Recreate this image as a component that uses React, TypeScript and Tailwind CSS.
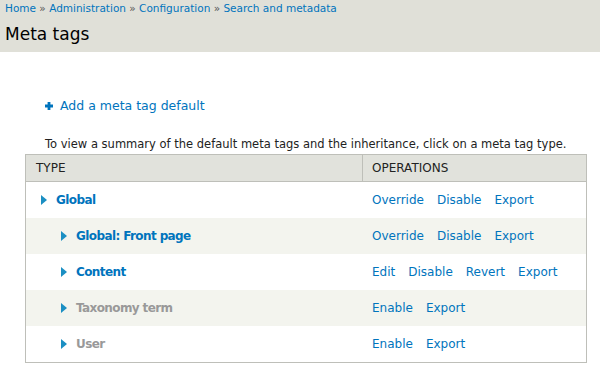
import React from "react";

const rows = [
  { name: "Global", depth: 0, disabled: false, ops: ["Override", "Disable", "Export"] },
  { name: "Global: Front page", depth: 1, disabled: false, ops: ["Override", "Disable", "Export"] },
  { name: "Content", depth: 1, disabled: false, ops: ["Edit", "Disable", "Revert", "Export"] },
  { name: "Taxonomy term", depth: 1, disabled: true, ops: ["Enable", "Export"] },
  { name: "User", depth: 1, disabled: true, ops: ["Enable", "Export"] },
];

const Triangle = () => (
  <svg width="6" height="10" viewBox="0 0 6 10" className="shrink-0">
    <path d="M0 0 L6 5 L0 10 Z" fill="#1b8fc3" />
  </svg>
);

const Plus = () => (
  <svg width="8" height="8" viewBox="0 0 8 8" className="shrink-0">
    <path d="M2.6 0 H5.4 V2.6 H8 V5.4 H5.4 V8 H2.6 V5.4 H0 V2.6 H2.6 Z" fill="#0074bd" />
  </svg>
);

export default function App() {
  return (
    <div className="w-[600px] h-[375px] bg-white text-[12px] text-[#333] font-['DejaVu_Sans',sans-serif] overflow-hidden">
      <div className="h-[52px] bg-[#e0e0d8] px-[5px] pt-[1px]">
        <div className="text-[10.5px] leading-[14px] text-[#0074bd]">
          Home <span className="text-[#555]">»</span> Administration{" "}
          <span className="text-[#555]">»</span> Configuration{" "}
          <span className="text-[#555]">»</span> Search and metadata
        </div>
        <h1 className="mt-[9px] text-[17px] leading-[20px] text-black">Meta tags</h1>
      </div>

      <div className="pl-[25px] pr-[13px]">
        <div className="mt-[45px] ml-[20px] flex items-center gap-[7px] text-[12.5px] text-[#0074bd]">
          <Plus />
          <span>Add a meta tag default</span>
        </div>
        <p className="mt-[21px] ml-[20px] text-[11.5px] leading-[15px] text-[#222] whitespace-nowrap">
          To view a summary of the default meta tags and the inheritance, click on a meta tag type.
        </p>
        <div className="mt-[2px] border border-[#bebfb9]">
          <div className="flex h-[27px] items-center bg-[#e1e2dc] border-b border-[#bebfb9] text-[#222]">
            <div className="w-[337px] h-full flex items-center pl-[10px] border-r border-[#bebfb9]">TYPE</div>
            <div className="pl-[9px]">OPERATIONS</div>
          </div>
          {rows.map((r, i) => (
            <div
              key={r.name}
              className={`flex h-[36px] items-center ${i % 2 === 1 ? "bg-[#f3f4ee]" : "bg-white"}`}
            >
              <div className={`w-[338px] flex items-center gap-[9px] ${r.depth ? "pl-[35px]" : "pl-[15px]"}`}>
                <Triangle />
                <span
                  className={`font-bold tracking-[-0.6px] ${r.disabled ? "text-[#999]" : "text-[#0074bd]"}`}
                >
                  {r.name}
                </span>
              </div>
              <div className="pl-[8px] flex gap-[13px] text-[#0074bd]">
                {r.ops.map((o) => (
                  <span key={o}>{o}</span>
                ))}
              </div>
            </div>
          ))}
        </div>
      </div>
    </div>
  );
}
